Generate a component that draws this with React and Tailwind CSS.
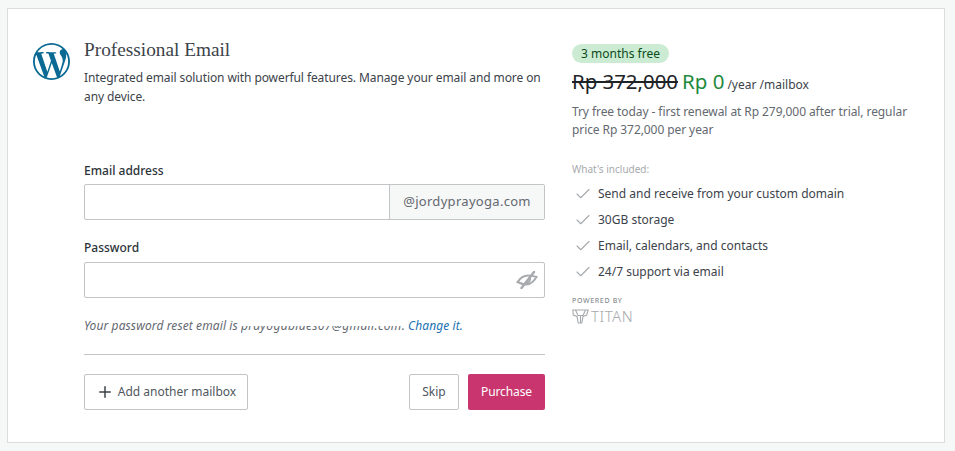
import React from 'react';
import { Check, Plus } from 'lucide-react';
import { SiWordpress } from 'react-icons/si';

const features = [
  'Send and receive from your custom domain',
  '30GB storage',
  'Email, calendars, and contacts',
  '24/7 support via email',
];

function EyeOffIcon() {
  return (
    <svg width="22" height="18" viewBox="0 0 22 18" fill="none" stroke="#a7aaad" strokeWidth="2" strokeLinecap="round">
      <path d="M1.500 11C4.500 6.500 8 4.500 12 4.500c3 0 5.500.5 8.500 1.500-2.500 4-6 7.500-10 7.500-3 0-6-1-9-2.500Z" />
      <path d="M14 6c1 3-1 6-4 6.500" />
      <path d="M18 1 5.500 17" strokeWidth="2.400" />
    </svg>
  );
}

function TitanMark() {
  return (
    <svg width="17" height="15" viewBox="0 0 17 15" fill="none" stroke="#a7aaad" strokeWidth="1.100">
      <path d="M.8 1h15.400l-1.500 5-3.700 1.500-1.200 6.500H6.200L5 7.500 1.300 6Z" />
      <path d="M3.500 1 6 6.500h5L13.500 1M8.500 6.500V14" />
    </svg>
  );
}

export default function App() {
  return (
    <div className="w-[955px] h-[451px] bg-[#f6f7f7] pt-2 pl-[7px] font-['Noto_Sans','Open_Sans',sans-serif] overflow-hidden">
      <div className="w-[938px] h-[435px] bg-white border border-[#dcdcde] flex pt-[31px] pl-[25px]">
        <SiWordpress className="w-[37px] h-[37px] mt-[3px] text-[#0b6a94] shrink-0" />

        <div className="w-[461px] ml-[14px] shrink-0">
          <h2 className="font-['Liberation_Serif',serif] text-[19.300px] leading-[22px] -mt-[1px] text-[#3c434a]">Professional Email</h2>
          <p className="mt-[8px] text-[12px] tracking-[-0.09px] leading-[18.500px] text-[#3c434a]">
            Integrated email solution with powerful features. Manage your email and more on any device.
          </p>

          <label className="block mt-[56px] text-[12px] leading-[18px] font-medium text-[#2c3338]">Email address</label>
          <div className="mt-[4px] flex h-[36px] border border-[#c3c4c7] rounded-[2px]">
            <div className="flex-1"></div>
            <div className="w-[155px] bg-[#f6f7f7] border-l border-[#c3c4c7] flex items-center justify-center text-[13px] tracking-[0.3px] text-[#646970]">
              @jordyprayoga.com
            </div>
          </div>

          <label className="block mt-[19px] text-[12px] leading-[18px] font-medium text-[#2c3338]">Password</label>
          <div className="mt-[5px] flex items-center justify-end h-[36px] pr-[6px] border border-[#c3c4c7] rounded-[2px]">
            <EyeOffIcon />
          </div>

          <p className="mt-[19px] text-[12px] tracking-[0.1px] leading-[18px] italic text-[#646970]">
            Your password reset email is{' '}
            <span className="inline-block tracking-[0.35px] [clip-path:inset(50%_0_0_0)]">prayogablues67@gmail.com</span>.{' '}
            <span className="text-[#2271b1]">Change it.</span>
          </p>

          <div className="mt-[19px] border-t border-[#c3c4c7]"></div>

          <div className="mt-[19px] flex items-center gap-[9px]">
            <button className="h-[36px] w-[164px] flex items-center justify-center gap-[4px] bg-white border border-[#c3c4c7] rounded-[2px] text-[12px] text-[#50575e]">
              <Plus className="w-[18px] h-[18px] text-[#3c434a]" strokeWidth={2} />
              Add another mailbox
            </button>
            <div className="flex-1"></div>
            <button className="h-[36px] w-[50px] bg-white border border-[#c3c4c7] rounded-[2px] text-[12px] text-[#50575e]">Skip</button>
            <button className="h-[36px] w-[77px] bg-[#c9356e] rounded-[2px] text-[12px] tracking-[-0.1px] text-white">Purchase</button>
          </div>
        </div>

        <div className="w-[345px] ml-[27px] shrink-0">
          <div className="mt-[1px] inline-block h-[19px] w-[97px] text-center rounded-full bg-[#cbecd2] text-[12px] leading-[19px] text-[#0a4b1a]">3 months free</div>
          <div className="mt-[3px] flex items-baseline h-[28px] text-[#1d2327]">
            <span className="text-[20.400px] leading-[28px] line-through decoration-[2px]">Rp 372,000</span>
            <span className="ml-[4px] text-[20.500px] leading-[28px] text-[#1e8a3c]">Rp 0</span>
            <span className="ml-[3px] text-[12px] text-[#3c434a]">/year /mailbox</span>
          </div>
          <p className="mt-[8px] text-[12px] tracking-[-0.08px] leading-[18px] text-[#646970]">
            Try free today - first renewal at Rp 279,000 after trial, regular price Rp 372,000 per year
          </p>

          <div className="mt-[23px] text-[10px] leading-[14px] text-[#a7aaad]">What's included:</div>
          <ul className="mt-[5px]">
            {features.map((f) => (
              <li key={f} className="flex items-center h-[26px] text-[12px] text-[#3c434a]">
                <Check className="w-[18px] h-[18px] ml-[2px] mr-[6px] text-[#a7aaad]" strokeWidth={1.500} />
                {f}
              </li>
            ))}
          </ul>

          <div className="mt-[12px] text-[7px] leading-[8px] tracking-[0.65px] font-medium text-[#8c8f94]">POWERED BY</div>
          <div className="mt-[3px] flex items-center gap-[2px]">
            <TitanMark />
            <span className="text-[15px] leading-[16px] font-light tracking-[0.5px] text-[#a7aaad]">TITAN</span>
          </div>
        </div>
      </div>
    </div>
  );
}
